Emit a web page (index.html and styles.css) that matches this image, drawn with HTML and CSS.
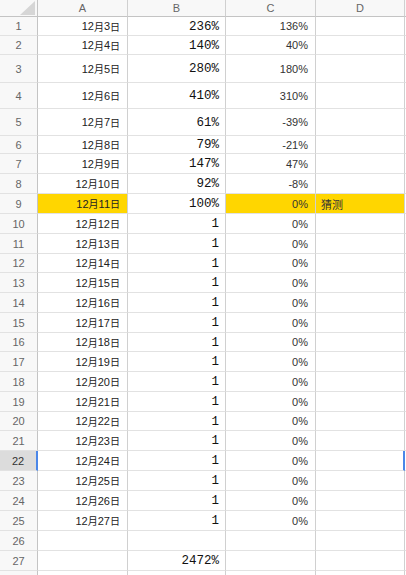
FILE: index.html
```html
<!DOCTYPE html>
<html>
<head>
<meta charset="utf-8">
<link rel="stylesheet" href="styles.css">
</head>
<body>
<div class="sheet">
  <div class="row head"><div class="rh corner"><span class="tri"></span></div><div class="c ch">A</div><div class="c ch">B</div><div class="c ch">C</div><div class="c ch">D</div><div class="c ch e"></div></div>
  <div class="row r19"><div class="rh">1</div><div class="c a">12<span class="k">月</span>3<span class="k">日</span></div><div class="c b">236%</div><div class="c p">136%</div><div class="c d"></div><div class="c e"></div></div>
  <div class="row r19"><div class="rh">2</div><div class="c a">12<span class="k">月</span>4<span class="k">日</span></div><div class="c b">140%</div><div class="c p">40%</div><div class="c d"></div><div class="c e"></div></div>
  <div class="row r28"><div class="rh">3</div><div class="c a">12<span class="k">月</span>5<span class="k">日</span></div><div class="c b">280%</div><div class="c p">180%</div><div class="c d"></div><div class="c e"></div></div>
  <div class="row r26"><div class="rh">4</div><div class="c a">12<span class="k">月</span>6<span class="k">日</span></div><div class="c b">410%</div><div class="c p">310%</div><div class="c d"></div><div class="c e"></div></div>
  <div class="row r27"><div class="rh">5</div><div class="c a">12<span class="k">月</span>7<span class="k">日</span></div><div class="c b">61%</div><div class="c p">-39%</div><div class="c d"></div><div class="c e"></div></div>
  <div class="row r18"><div class="rh">6</div><div class="c a">12<span class="k">月</span>8<span class="k">日</span></div><div class="c b">79%</div><div class="c p">-21%</div><div class="c d"></div><div class="c e"></div></div>
  <div class="row"><div class="rh">7</div><div class="c a">12<span class="k">月</span>9<span class="k">日</span></div><div class="c b">147%</div><div class="c p">47%</div><div class="c d"></div><div class="c e"></div></div>
  <div class="row"><div class="rh">8</div><div class="c a">12<span class="k">月</span>10<span class="k">日</span></div><div class="c b">92%</div><div class="c p">-8%</div><div class="c d"></div><div class="c e"></div></div>
  <div class="row"><div class="rh">9</div><div class="c a hl">12<span class="k">月</span>11<span class="k">日</span></div><div class="c b">100%</div><div class="c p hl">0%</div><div class="c d hl">猜测</div><div class="c e"></div></div>
  <div class="row"><div class="rh">10</div><div class="c a">12<span class="k">月</span>12<span class="k">日</span></div><div class="c b">1</div><div class="c p">0%</div><div class="c d"></div><div class="c e"></div></div>
  <div class="row"><div class="rh">11</div><div class="c a">12<span class="k">月</span>13<span class="k">日</span></div><div class="c b">1</div><div class="c p">0%</div><div class="c d"></div><div class="c e"></div></div>
  <div class="row r19"><div class="rh">12</div><div class="c a">12<span class="k">月</span>14<span class="k">日</span></div><div class="c b">1</div><div class="c p">0%</div><div class="c d"></div><div class="c e"></div></div>
  <div class="row"><div class="rh">13</div><div class="c a">12<span class="k">月</span>15<span class="k">日</span></div><div class="c b">1</div><div class="c p">0%</div><div class="c d"></div><div class="c e"></div></div>
  <div class="row"><div class="rh">14</div><div class="c a">12<span class="k">月</span>16<span class="k">日</span></div><div class="c b">1</div><div class="c p">0%</div><div class="c d"></div><div class="c e"></div></div>
  <div class="row"><div class="rh">15</div><div class="c a">12<span class="k">月</span>17<span class="k">日</span></div><div class="c b">1</div><div class="c p">0%</div><div class="c d"></div><div class="c e"></div></div>
  <div class="row r19"><div class="rh">16</div><div class="c a">12<span class="k">月</span>18<span class="k">日</span></div><div class="c b">1</div><div class="c p">0%</div><div class="c d"></div><div class="c e"></div></div>
  <div class="row"><div class="rh">17</div><div class="c a">12<span class="k">月</span>19<span class="k">日</span></div><div class="c b">1</div><div class="c p">0%</div><div class="c d"></div><div class="c e"></div></div>
  <div class="row"><div class="rh">18</div><div class="c a">12<span class="k">月</span>20<span class="k">日</span></div><div class="c b">1</div><div class="c p">0%</div><div class="c d"></div><div class="c e"></div></div>
  <div class="row"><div class="rh">19</div><div class="c a">12<span class="k">月</span>21<span class="k">日</span></div><div class="c b">1</div><div class="c p">0%</div><div class="c d"></div><div class="c e"></div></div>
  <div class="row r19"><div class="rh">20</div><div class="c a">12<span class="k">月</span>22<span class="k">日</span></div><div class="c b">1</div><div class="c p">0%</div><div class="c d"></div><div class="c e"></div></div>
  <div class="row"><div class="rh">21</div><div class="c a">12<span class="k">月</span>23<span class="k">日</span></div><div class="c b">1</div><div class="c p">0%</div><div class="c d"></div><div class="c e"></div></div>
  <div class="row sel"><div class="rh">22</div><div class="c a">12<span class="k">月</span>24<span class="k">日</span></div><div class="c b">1</div><div class="c p">0%</div><div class="c d"></div><div class="c e"></div></div>
  <div class="row"><div class="rh">23</div><div class="c a">12<span class="k">月</span>25<span class="k">日</span></div><div class="c b">1</div><div class="c p">0%</div><div class="c d"></div><div class="c e"></div></div>
  <div class="row"><div class="rh">24</div><div class="c a">12<span class="k">月</span>26<span class="k">日</span></div><div class="c b">1</div><div class="c p">0%</div><div class="c d"></div><div class="c e"></div></div>
  <div class="row"><div class="rh">25</div><div class="c a">12<span class="k">月</span>27<span class="k">日</span></div><div class="c b">1</div><div class="c p">0%</div><div class="c d"></div><div class="c e"></div></div>
  <div class="row"><div class="rh">26</div><div class="c a"></div><div class="c b"></div><div class="c p"></div><div class="c d"></div><div class="c e"></div></div>
  <div class="row"><div class="rh">27</div><div class="c a"></div><div class="c b">2472%</div><div class="c p"></div><div class="c d"></div><div class="c e"></div></div>
  <div class="row"><div class="rh"></div><div class="c a"></div><div class="c b"></div><div class="c p"></div><div class="c d"></div><div class="c e"></div></div>
</div>
</body>
</html>
```

FILE: styles.css
```css
html, body {
  margin: 0;
  padding: 0;
  background: #ffffff;
  overflow: hidden;
}

.sheet {
  width: 406px;
  height: 575px;
  overflow: hidden;
  font-family: "Liberation Sans", "Noto Sans CJK SC", sans-serif;
  font-size: 11px;
  color: #222;
}

.row {
  display: grid;
  grid-template-columns: 38px 90px 98px 90px 89px 1fr;
  height: 20px;
}

.row.head { height: 17px; }
.row.r18 { height: 18px; }
.row.r19 { height: 19px; }
.row.r26 { height: 26px; }
.row.r27 { height: 27px; }
.row.r28 { height: 28px; }

.rh, .c {
  box-sizing: border-box;
  display: flex;
  align-items: center;
  border-bottom: 1px solid #e2e2e2;
  border-right: 1px solid #d0d0d0;
  overflow: hidden;
  white-space: nowrap;
}

.rh {
  justify-content: center;
  background: #f8f8f8;
  color: #666;
  border-right-color: #c4c4c4;
  font-size: 11px;
}

.head .rh, .head .c {
  border-bottom-color: #c4c4c4;
}

.corner {
  position: relative;
}

.tri {
  position: absolute;
  right: 2px;
  bottom: 1px;
  width: 0;
  height: 0;
  border-left: 15px solid transparent;
  border-bottom: 14px solid #d6d6d6;
}

.ch {
  justify-content: center;
  background: #f8f8f8;
  color: #666;
  font-size: 11px;
}

.a, .b, .p {
  justify-content: flex-end;
  padding-right: 7px;
}

.a { color: #222; }

.k { font-size: 10px; }

.b {
  font-family: "Liberation Mono", monospace;
  font-size: 12.5px;
  color: #111;
  padding-right: 6px;
  padding-top: 1px;
}

.p { color: #333; }

.d {
  padding-left: 5px;
  color: #333;
}

.e { border-right: none; }

.hl { background: #ffd600; }

.sel .rh {
  background: #dcdcdc;
  color: #333;
  border-right: 2px solid #4a86e8;
}

.sel .d {
  border-right: 2px solid #4a86e8;
}
```
